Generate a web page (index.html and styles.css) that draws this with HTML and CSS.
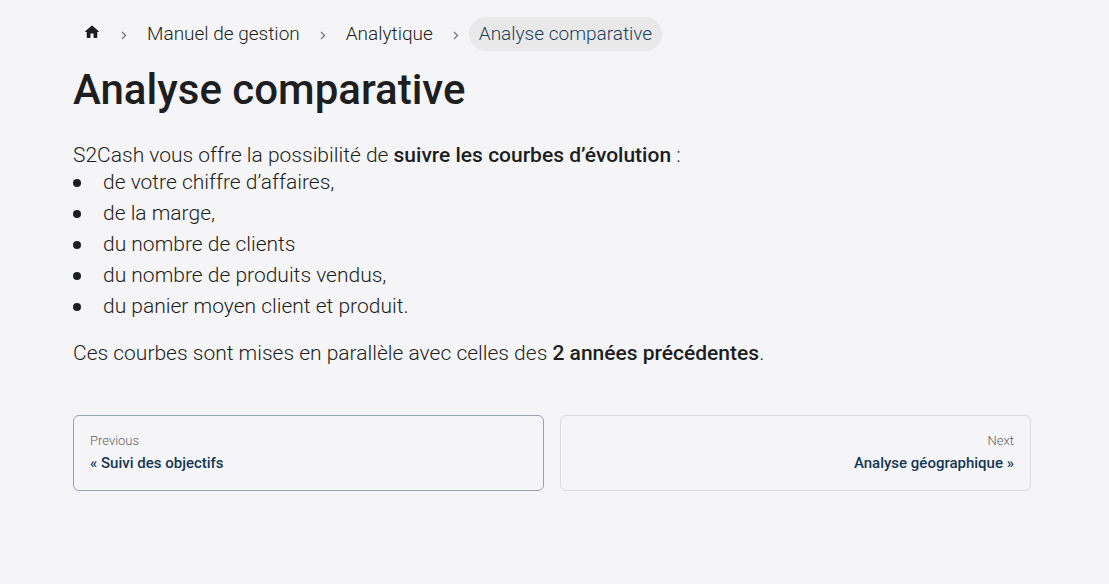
FILE: index.html
```html
<!DOCTYPE html>
<html lang="fr">
<head>
<meta charset="utf-8">
<title>Analyse comparative</title>
<link rel="stylesheet" href="styles.css">
</head>
<body>
<main class="page">
  <nav aria-label="Fil d’Ariane">
    <ul class="breadcrumbs">
      <li><a class="crumb crumb-home" href="#" aria-label="Accueil"><svg class="home-icon" viewBox="0 0 24 24" aria-hidden="true"><path d="M10 19v-5h4v5c0 .55.45 1 1 1h3c.55 0 1-.45 1-1v-7h1.700c.46 0 .68-.57.33-.87L12.670 3.600c-.38-.34-.96-.34-1.340 0l-8.360 7.530c-.34.3-.13.870.33.870H5v7c0 .55.45 1 1 1h3c.55 0 1-.45 1-1z"/></svg></a></li>
      <li><svg class="chevron" viewBox="0 0 6 9" aria-hidden="true"><path d="M1 1l3.500 3.500L1 8"/></svg><a class="crumb" href="#">Manuel de gestion</a></li>
      <li><svg class="chevron" viewBox="0 0 6 9" aria-hidden="true"><path d="M1 1l3.500 3.500L1 8"/></svg><a class="crumb" href="#">Analytique</a></li>
      <li><svg class="chevron" viewBox="0 0 6 9" aria-hidden="true"><path d="M1 1l3.500 3.500L1 8"/></svg><span class="crumb crumb-active" aria-current="page">Analyse comparative</span></li>
    </ul>
  </nav>
  <article class="content">
    <h1>Analyse comparative</h1>
    <p>S2Cash vous offre la possibilité de <strong>suivre les courbes d’évolution</strong> :</p>
    <ul class="bullets">
      <li>de votre chiffre d’affaires,</li>
      <li>de la marge,</li>
      <li>du nombre de clients</li>
      <li>du nombre de produits vendus,</li>
      <li>du panier moyen client et produit.</li>
    </ul>
    <p>Ces courbes sont mises en parallèle avec celles des <strong>2 années précédentes</strong>.</p>
  </article>
  <nav class="pagination" aria-label="Pages">
    <a class="card card-current" href="#"><span class="card-sub">Previous</span><span class="card-label">« Suivi des objectifs</span></a>
    <a class="card card-next" href="#"><span class="card-sub">Next</span><span class="card-label">Analyse géographique »</span></a>
  </nav>
</main>
</body>
</html>
```
FILE: styles.css
```css
* { box-sizing: border-box; }
body {
  margin: 0;
  background: #f5f5f7;
  color: #1c1e21;
  font: 300 21px/30px Roboto, "Liberation Sans", sans-serif;
}
a { color: inherit; text-decoration: none; }
h1, p, ul { margin: 0; }
.page { padding: 17px 78px 40px 73px; }
.breadcrumbs {
  display: flex;
  flex-wrap: wrap;
  padding: 0;
  list-style: none;
  font-size: 19px;
  line-height: 34px;
}
.breadcrumbs li { display: flex; align-items: center; }
.crumb { padding: 0 10px; border-radius: 17px; }
.crumb-home { display: flex; }
.home-icon { width: 18px; height: 18px; margin-bottom: 4px; fill: #1c1e21; }
.chevron {
  width: 6px;
  height: 9px;
  margin: 3px 10px 0 10px;
  fill: none;
  stroke: #777;
  stroke-width: 1.3;
}
.crumb-active { background: #e9e9ea; color: #1d3f60; }
h1 {
  margin: 14px 0 25px;
  font-size: 42px;
  line-height: 50px;
  font-weight: 500;
}
strong { font-weight: 500; }
.bullets { padding: 0; margin: -3px 0 17px; list-style: none; }
.bullets li { display: flex; align-items: center; gap: 22px; margin-bottom: 1px; }
.bullets li::before {
  content: "";
  width: 8px;
  height: 8px;
  margin-top: 2px;
  border-radius: 50%;
  background: #1c1e21;
}
.pagination {
  display: grid;
  grid-template-columns: 1fr 1fr;
  gap: 16px;
  margin-top: 47px;
}
.card {
  display: flex;
  flex-direction: column;
  padding: 14px 16px;
  border: 1px solid #dadce0;
  border-radius: 6px;
}
.card-current { border-color: #93a3b3; }
.card-next { text-align: right; }
.card-sub { font-size: 13px; line-height: 21px; color: #606266; }
.card-label { font-size: 15px; line-height: 25px; font-weight: 500; color: #143655; }
```
